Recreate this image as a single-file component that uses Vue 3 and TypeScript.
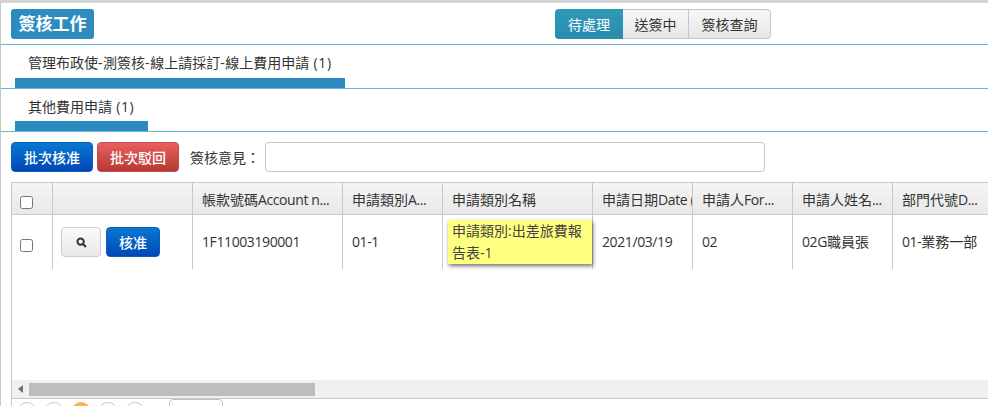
<script setup lang="ts">
interface Col { label: string; value: string; width: number }
interface Run { text: string; latin: boolean }
const columns: Col[] = [
  { label: '帳款號碼Account n...', value: '1F11003190001', width: 150 },
  { label: '申請類別A...', value: '01-1', width: 100 },
  { label: '申請類別名稱', value: '', width: 150 },
  { label: '申請日期Date (', value: '2021/03/19', width: 100 },
  { label: '申請人For...', value: '02', width: 100 },
  { label: '申請人姓名...', value: '02G職員張', width: 100 },
  { label: '部門代號D...', value: '01-業務一部', width: 100 },
]
const statuses = ['待處理', '送簽中', '簽核查詢']
const tabs = [
  { label: '管理布政使-測簽核-線上請採訂-線上費用申請 (1)', bar: 330 },
  { label: '其他費用申請 (1)', bar: 133 },
]
function runs(s: string): Run[] {
  const parts = s.match(/[\u0020-\u007e]+|[^\u0020-\u007e]+/g) ?? []
  return parts.map((text) => ({ text, latin: /^[\u0020-\u007e]/.test(text) }))
}
</script>

<template>
  <div class="page">
    <header class="head">
      <h1 class="title">簽核工作</h1>
      <div class="group">
        <button v-for="(s, i) in statuses" :key="s" class="seg" :class="{ on: i === 0 }">{{ s }}</button>
      </div>
    </header>
    <section v-for="t in tabs" :key="t.label" class="tab">
      <div class="tab-label"><span><span v-for="r in runs(t.label)" :key="r.text" :class="{ wide: r.latin }">{{ r.text }}</span></span></div>
      <div class="tab-bar" :style="{ width: t.bar + 'px' }"></div>
    </section>
    <div class="actions">
      <button class="btn blue">批次核准</button>
      <button class="btn red">批次駁回</button>
      <label class="opinion">簽核意見：</label>
      <input class="note" type="text" />
    </div>
    <div class="grid">
      <div class="row hrow">
        <div class="cell c-check"><span class="box"></span></div>
        <div class="cell c-act"></div>
        <div v-for="c in columns" :key="c.label" class="cell txt" :style="{ width: c.width + 'px' }">
          <span><span v-for="r in runs(c.label)" :key="r.text" :class="{ tight: r.latin }">{{ r.text }}</span></span>
        </div>
      </div>
      <div class="row brow">
        <div class="cell c-check"><span class="box"></span></div>
        <div class="cell c-act">
          <button class="zoom">
            <svg width="11" height="11" viewBox="0 0 11 11">
              <circle cx="4.6" cy="4.6" r="3.2" fill="none" stroke="#333" stroke-width="2" />
              <path d="M7 7l3 3" stroke="#333" stroke-width="2.2" />
            </svg>
          </button>
          <button class="btn blue approve">核准</button>
        </div>
        <div v-for="c in columns" :key="c.label" class="cell txt" :class="{ 'has-tip': c.value === '' }" :style="{ width: c.width + 'px' }">
          <div v-if="c.value === ''" class="tip">申請類別:出差旅費報告表-1</div>
          <span v-else><span v-for="r in runs(c.value)" :key="r.text" :class="{ tight: r.latin }">{{ r.text }}</span></span>
        </div>
      </div>
      <div class="spacer"></div>
      <div class="scroll">
        <span class="arrow"></span>
        <div class="thumb"></div>
      </div>
      <div class="pager">
        <span class="dot"></span><span class="dot"></span><span class="dot cur"></span><span class="dot"></span><span class="dot"></span>
        <span class="size"></span>
      </div>
    </div>
  </div>
</template>

<style scoped>
.page {
  width: 988px;
  height: 406px;
  overflow: hidden;
  box-sizing: border-box;
  background: #fff;
  border-top: 3px solid #d4d4d4;
  border-left: 1px solid #c8c8c8;
  font-family: "Open Sans", "Noto Sans CJK TC", sans-serif;
  font-size: 14px;
  color: #333;
}
.head {
  display: flex;
  justify-content: space-between;
  height: 42px;
  padding: 6px 0 0 10px;
  box-sizing: border-box;
  border-bottom: 1px solid #6fb3d9;
}
.title {
  margin: 0;
  width: 83px;
  height: 30px;
  line-height: 30px;
  text-align: center;
  font-size: 17px;
  font-weight: 700;
  color: #fff;
  background: #2e8bc0;
  border-radius: 3px;
}
.group {
  display: flex;
  height: 30px;
  margin-right: 217px;
}
.seg {
  height: 30px;
  padding: 0;
  font: inherit;
  color: #333;
  background: linear-gradient(#f7f7f7, #e6e6e6);
  border: 1px solid #c6c6c6;
  border-left: 0;
  width: 66px;
}
.seg:last-child {
  width: 82px;
  border-radius: 0 4px 4px 0;
}
.seg.on {
  width: 68px;
  color: #fff;
  background: linear-gradient(#2f9ab8, #2a8bae);
  border: 0;
  border-radius: 4px 0 0 4px;
}
.tab {
  height: 44px;
  box-sizing: border-box;
  padding-left: 14px;
  border-bottom: 1px solid #6fb3d9;
  display: flex;
  flex-direction: column;
}
.tab + .tab {
  height: 43px;
}
.tab-label {
  flex: 1;
  display: flex;
  align-items: center;
  padding: 1px 0 0 13px;
  box-sizing: border-box;
}
.wide {
  letter-spacing: 0.6px;
}
.tight {
  letter-spacing: -0.4px;
}
.tab-bar {
  height: 10px;
  background: #2a8abf;
}
.actions {
  display: flex;
  align-items: center;
  height: 30px;
  margin-top: 10px;
  padding-left: 10px;
}
.btn {
  height: 30px;
  width: 82px;
  padding: 0;
  font: inherit;
  color: #fff;
  border-radius: 4px;
  border: 1px solid transparent;
  font-weight: 500;
}
.blue {
  background: linear-gradient(#0a78d0, #0047b8);
  border-color: #0a5fb0;
}
.red {
  margin-left: 4px;
  background: linear-gradient(#ea5f5f, #b53a34);
  border-color: #c04a48;
}
.opinion {
  margin-left: 11px;
  width: 75px;
}
.note {
  width: 500px;
  height: 30px;
  box-sizing: border-box;
  border: 1px solid #c6c6c6;
  border-radius: 4px;
  background: #fff;
}
.grid {
  margin: 10px 0 0 10px;
  border-top: 1px solid #c8c8c8;
  border-left: 1px solid #c8c8c8;
  display: flex;
  flex-direction: column;
}
.row {
  display: flex;
  flex: none;
}
.hrow {
  height: 32px;
  background: linear-gradient(#f5f5f5, #e8e8e8);
  border-bottom: 1px solid #c8c8c8;
  box-sizing: border-box;
}
.brow {
  height: 54px;
}
.cell {
  flex: none;
  display: flex;
  align-items: center;
  box-sizing: border-box;
  border-right: 1px solid #c8c8c8;
  white-space: nowrap;
}
.c-check {
  width: 41px;
  padding-left: 8px;
}
.c-act {
  width: 140px;
  padding-left: 8px;
}
.txt {
  padding-left: 9px;
  overflow: hidden;
}
.hrow .c-check {
  padding-top: 8px;
}
.brow .c-check {
  padding-top: 7px;
}
.brow .txt {
  padding-bottom: 2px;
}
.txt.has-tip {
  overflow: visible;
  position: relative;
}
.box {
  width: 13px;
  height: 13px;
  box-sizing: border-box;
  border: 1px solid #767676;
  border-radius: 2.5px;
  background: #fff;
}
.zoom {
  width: 40px;
  height: 30px;
  padding: 0;
  border: 1px solid #ccc;
  border-radius: 4px;
  background: linear-gradient(#fafafa, #e8e8e8);
  display: flex;
  align-items: center;
  justify-content: center;
}
.approve {
  width: 54px;
  margin-left: 5px;
}
.tip {
  position: absolute;
  left: 5px;
  top: 5px;
  width: 144px;
  height: 44px;
  box-sizing: border-box;
  padding: 0 4px;
  white-space: normal;
  line-height: 22px;
  color: #444;
  background: #ffff80;
  box-shadow: 1px 2px 4px rgba(0, 0, 0, 0.55);
  z-index: 2;
}
.spacer {
  flex: none;
  height: 111px;
}
.scroll {
  flex: none;
  height: 18px;
  box-sizing: border-box;
  background: #f0f0f0;
  display: flex;
  align-items: center;
}
.arrow {
  margin-left: 6px;
  border-style: solid;
  border-width: 4.5px 5px 4.5px 0;
  border-color: transparent #6e6e6e transparent transparent;
}
.thumb {
  margin-left: 6px;
  width: 286px;
  height: 13px;
  background: #bdbdbd;
}
.pager {
  flex: none;
  display: flex;
  align-items: flex-start;
  border-top: 1px solid #c8c8c8;
  padding: 3px 0 0 5px;
  gap: 7px;
  height: 30px;
}
.dot {
  width: 20px;
  height: 20px;
  box-sizing: border-box;
  border: 1px solid #c8c8c8;
  border-radius: 50%;
}
.dot.cur {
  background: #fbb450;
  border-color: #fbb450;
}
.size {
  margin: -3px 0 0 17px;
  width: 54px;
  height: 24px;
  box-sizing: border-box;
  border: 1px solid #c0c0c0;
  border-radius: 4px;
}
</style>

<style>
body { margin: 0; }
</style>
